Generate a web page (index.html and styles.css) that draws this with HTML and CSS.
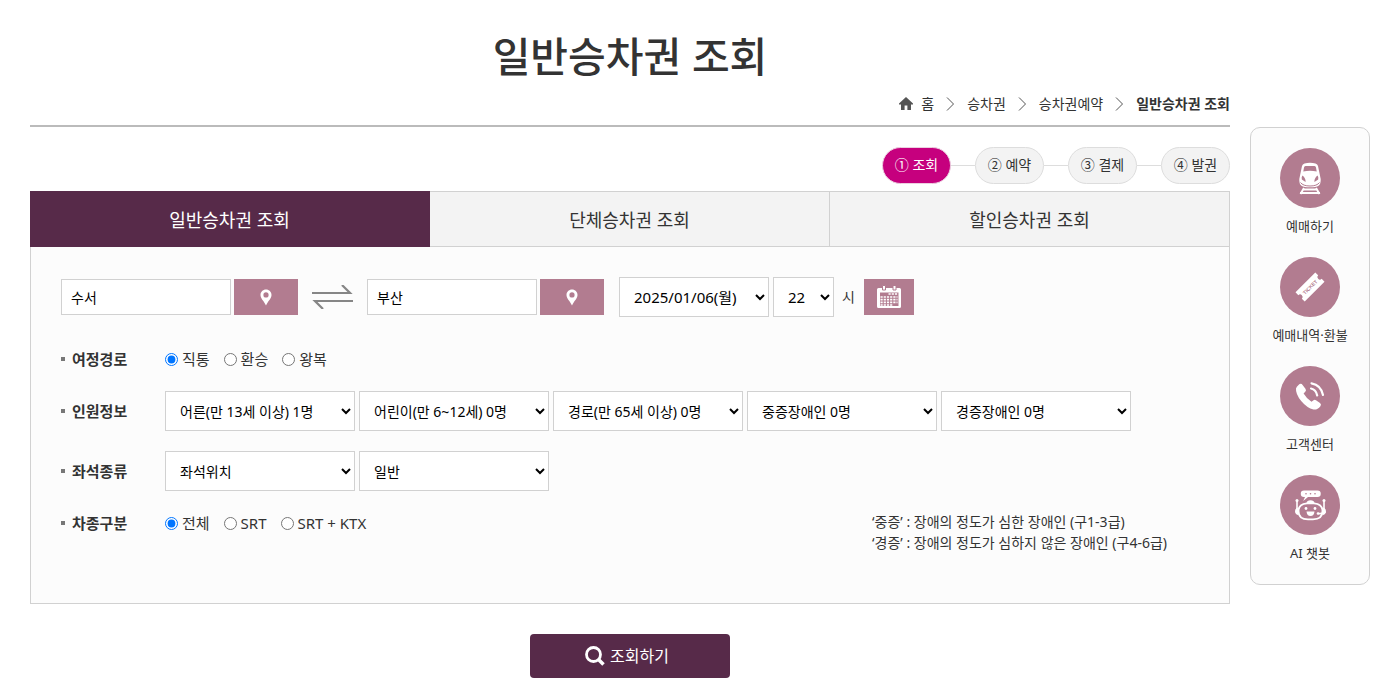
FILE: index.html
```html
<!DOCTYPE html>
<html lang="ko">
<head>
<meta charset="utf-8">
<meta name="viewport" content="width=device-width, initial-scale=1">
<title>일반승차권 조회</title>
<link rel="stylesheet" href="styles.css">
</head>
<body>
<div class="page">
  <main class="content">
    <h1 class="title">일반승차권 조회</h1>
    <nav class="breadcrumb" aria-label="현재 위치">
      <a class="crumb home" href="#"><svg width="14" height="13" viewBox="0 0 14 13"><path d="M7 0L0 6.600V7.600H2V13h3.600V8.600h2.800V13H12V7.600h2V6.600z" fill="#555"/></svg>홈</a>
      <svg class="sep" width="9" height="14" viewBox="0 0 9 14"><path d="M1 .5L7.5 7L1 13.5" fill="none" stroke="#555"/></svg>
      <a class="crumb" href="#">승차권</a>
      <svg class="sep" width="9" height="14" viewBox="0 0 9 14"><path d="M1 .5L7.5 7L1 13.5" fill="none" stroke="#555"/></svg>
      <a class="crumb" href="#">승차권예약</a>
      <svg class="sep" width="9" height="14" viewBox="0 0 9 14"><path d="M1 .5L7.5 7L1 13.5" fill="none" stroke="#555"/></svg>
      <strong class="current">일반승차권 조회</strong>
    </nav>
    <ol class="steps">
      <li class="step"><span class="pill on">① 조회</span></li>
      <li class="step"><span class="pill">② 예약</span></li>
      <li class="step"><span class="pill">③ 결제</span></li>
      <li class="step"><span class="pill">④ 발권</span></li>
    </ol>
    <nav class="tabs">
      <a class="tab active" href="#">일반승차권 조회</a>
      <a class="tab" href="#">단체승차권 조회</a>
      <a class="tab" href="#">할인승차권 조회</a>
    </nav>
    <form id="search" class="panel">
      <div class="route">
        <input class="station" type="text" value="수서" aria-label="출발역">
        <button class="pick" type="button" aria-label="출발역 선택"><svg width="12" height="17" viewBox="0 0 12 17"><path fill-rule="evenodd" d="M6 .5C2.800 .5 .5 2.900 .5 6C.5 9.500 4 12 6 16.500C8 12 11.500 9.500 11.500 6C11.500 2.900 9.200 .5 6 .5zM6 3.300a2.600 2.600 0 1 1 0 5.200a2.600 2.600 0 1 1 0-5.200z" fill="#fff"/></svg></button>
        <button class="swap" type="button" aria-label="출발역 도착역 바꾸기"><svg width="41" height="24" viewBox="0 0 41 24"><path d="M0 8h38L30 0M41 16H3l8 8" fill="none" stroke="#868686" stroke-width="2.200"/></svg></button>
        <input class="station" type="text" value="부산" aria-label="도착역">
        <button class="pick" type="button" aria-label="도착역 선택"><svg width="12" height="17" viewBox="0 0 12 17"><path fill-rule="evenodd" d="M6 .5C2.800 .5 .5 2.900 .5 6C.5 9.500 4 12 6 16.500C8 12 11.500 9.500 11.500 6C11.500 2.900 9.200 .5 6 .5zM6 3.300a2.600 2.600 0 1 1 0 5.200a2.600 2.600 0 1 1 0-5.200z" fill="#fff"/></svg></button>
        <select class="select date" aria-label="출발일"><option>2025/01/06(월)</option></select>
        <select class="select hour" id="hour"><option>22</option></select>
        <label class="unit" for="hour">시</label>
        <button class="calendar" type="button" aria-label="달력"><svg width="24" height="24" viewBox="0 0 24 24"><path fill="#fff" fill-rule="evenodd" d="M1.500 3H22.500Q24 3 24 4.500V21.500Q24 23 22.500 23H1.500Q0 23 0 21.500V4.500Q0 3 1.500 3zM3 7.500V21H21.500V7.500z"/><path fill="#fff" stroke="#b27c90" d="M5.500 .5h3v4.500h-3zM16 .5h3v4.500h-3z"/><path stroke="#fff" stroke-width="1.700" stroke-dasharray="2.200 1" d="M11.500 9h9M3.500 12h17M3.500 14.700h17M3.500 17.400h17M3.500 20h12.500"/></svg></button>
      </div>

      <div class="row" role="radiogroup" aria-labelledby="l-route">
        <span class="legend" id="l-route">여정경로</span>
        <div class="radios">
          <label class="radio"><input type="radio" name="route" checked>직통</label>
          <label class="radio"><input type="radio" name="route">환승</label>
          <label class="radio"><input type="radio" name="route">왕복</label>
        </div>
      </div>

      <div class="row" role="group" aria-labelledby="l-people">
        <span class="legend" id="l-people">인원정보</span>
        <div class="selects">
          <select class="select" aria-label="어른"><option>어른(만 13세 이상) 1명</option></select>
          <select class="select" aria-label="어린이"><option>어린이(만 6~12세) 0명</option></select>
          <select class="select" aria-label="경로"><option>경로(만 65세 이상) 0명</option></select>
          <select class="select" aria-label="중증장애인"><option>중증장애인 0명</option></select>
          <select class="select" aria-label="경증장애인"><option>경증장애인 0명</option></select>
        </div>
      </div>

      <div class="row" role="group" aria-labelledby="l-seat">
        <span class="legend" id="l-seat">좌석종류</span>
        <div class="selects">
          <select class="select" aria-label="좌석위치"><option>좌석위치</option></select>
          <select class="select" aria-label="좌석구분"><option>일반</option></select>
        </div>
      </div>

      <div class="row last" role="radiogroup" aria-labelledby="l-train">
        <span class="legend" id="l-train">차종구분</span>
        <div class="radios">
          <label class="radio"><input type="radio" name="train" checked>전체</label>
          <label class="radio"><input type="radio" name="train">SRT</label>
          <label class="radio"><input type="radio" name="train">SRT + KTX</label>
        </div>
        <p class="note">‘중증’ : 장애의 정도가 심한 장애인 (구1-3급)<br>‘경증’ : 장애의 정도가 심하지 않은 장애인 (구4-6급)</p>
      </div>
    </form>
    <button class="submit" type="submit" form="search"><svg width="20" height="20" viewBox="0 0 20 20"><circle cx="8.500" cy="8.500" r="7" fill="none" stroke="#fff" stroke-width="2.800"/><path d="M13.500 13.500L18.500 18.500" stroke="#fff" stroke-width="3.600"/></svg>조회하기</button>
  </main>

  <aside class="quick">
    <a class="quick-link" href="#"><span class="disc"><svg width="60" height="60" viewBox="0 0 60 60"><path fill="#fff" fill-rule="evenodd" d="M24.500 15.500Q30 14 35.500 15.500Q37.500 16 38 18L40.700 31Q41 36 38.500 37.800Q36 39.300 30 39.300Q24 39.300 21.500 37.800Q19 36 19.300 31L22 18Q22.500 16 24.500 15.500zM25.500 18Q24.200 18 24 19.500L23.300 23.500Q30 21.800 36.700 23.500L36 19.500Q35.800 18 34.500 18zM22.400 27.500Q21.300 29 21.800 31.500L25.600 34Q25.800 30 22.400 27.500zM37.600 27.500Q38.700 29 38.200 31.500L34.400 34Q34.200 30 37.600 27.500z"/><path fill="none" stroke="#b27c90" d="M20.500 34.500Q23 38 30 38Q37 38 39.500 34.500"/><path fill="none" stroke="#fff" stroke-width="2" d="M24 40l-3.500 6M36 40l3.500 6M22.500 41.500h15M20 45h20"/></svg></span>예매하기</a>
    <a class="quick-link" href="#"><span class="disc"><svg width="60" height="60" viewBox="0 0 60 60"><g transform="rotate(-45 30 30)"><path fill="#fff" d="M16 23.500H44V27.500A2.500 2.500 0 0 0 44 32.500V36.500H16V32.500A2.500 2.500 0 0 0 16 27.500z"/><text class="ticket-text" x="30" y="32" text-anchor="middle">TICKET</text></g></svg></span>예매내역·환불</a>
    <a class="quick-link" href="#"><span class="disc"><svg width="60" height="60" viewBox="0 0 60 60"><path fill="#fff" d="M18.500 19Q21 16.500 22.800 19.200L25.600 23Q26.600 24.800 25 26L23.600 27.500Q26.500 32.500 31.500 35.800L33.500 34.200Q34.700 33.200 36 34.200L40 37Q41.800 38.500 40.400 40.200Q37.500 44 33.500 43.500Q27 42 21.200 35Q15.500 28 16 22.500Q16.500 20.500 18.500 19z"/><path fill="none" stroke="#fff" stroke-width="2.200" stroke-linecap="round" d="M31 22.500Q36 23.500 37.200 29.500M31.500 17.300Q41 19 43 29"/></svg></span>고객센터</a>
    <a class="quick-link" href="#"><span class="disc"><svg width="60" height="60" viewBox="0 0 60 60"><path fill="#fff" d="M24 15.500H37.500A3.200 3.200 0 0 1 37.500 22H28L23.200 26L25 22H24A3.200 3.200 0 0 1 24 15.500z"/><g fill="#b27c90"><circle cx="26" cy="18.700" r=".8"/><circle cx="30.500" cy="18.700" r=".8"/><circle cx="35" cy="18.700" r=".8"/></g><path fill="#fff" d="M26.500 28Q27 25.300 30.500 25.300Q34 25.300 34.500 28z"/><path fill="none" stroke="#fff" stroke-width="1.800" d="M27 28.300H34Q42.500 29 42.500 36Q42.500 44.300 33 44.300H28Q18.500 44.300 18.500 36Q18.500 29 27 28.300z"/><path fill="none" stroke="#fff" stroke-width="1.600" d="M17 26v12M44 26v12M45.500 37Q43 39 38 38.500"/><path fill="#fff" d="M18.500 32.500Q15 33 15 36.200Q15 39.500 18.500 40zM42.500 32.500Q46 33 46 36.200Q46 39.500 42.500 40zM26.500 36.500H34.500Q34 41 30.500 41Q27 41 26.500 36.500z"/><g fill="#fff"><circle cx="17" cy="25.500" r="1.500"/><circle cx="44" cy="25.500" r="1.500"/><circle cx="26" cy="33.500" r="1.400"/><circle cx="35" cy="33.500" r="1.400"/><circle cx="38" cy="38.500" r="1.300"/></g></svg></span>AI 챗봇</a>
  </aside>
</div>
</body>
</html>
```
FILE: styles.css
```css
* { box-sizing: border-box; }

body {
  margin: 0;
  background: #fff;
  color: #333;
  font-family: "Noto Sans", "Noto Sans CJK KR", sans-serif;
  font-size: 14px;
  line-height: 20px;
}

a { color: inherit; text-decoration: none; }
svg { display: block; flex: none; }
button { border: 0; padding: 0; font: inherit; cursor: pointer; }
input, select { font: inherit; margin: 0; }

.page {
  display: flex;
  align-items: flex-start;
  gap: 20px;
  padding: 0 11px 14px 30px;
}

.content { flex: 1; min-width: 0; }

.title {
  margin: 0;
  padding-top: 26px;
  font-size: 41px;
  line-height: 60px;
  font-weight: 500;
  text-align: center;
}

.breadcrumb {
  display: flex;
  justify-content: flex-end;
  align-items: center;
  gap: 10px;
  height: 41px;
  padding-bottom: 4px;
  border-bottom: 2px solid #bbb;
}
.crumb { display: flex; align-items: center; gap: 8px; }
.sep { margin: 0 2px; }
.current { font-weight: 700; }

.steps {
  display: flex;
  justify-content: flex-end;
  margin: 0;
  padding: 20px 0 7px;
  list-style: none;
}
.step { display: flex; align-items: center; }
.step + .step::before {
  content: "";
  width: 24px;
  height: 1px;
  background: #ddd;
}
.pill {
  min-width: 69px;
  padding: 7px 10px 8px;
  border: 1px solid #ddd;
  border-radius: 19px;
  background: #f3f3f3;
  text-align: center;
}
.pill.on { border-color: #eccfe0; background: #c6007e; color: #fff; }

.tabs { display: flex; }
.tab {
  flex: 1;
  height: 56px;
  border: 1px solid #d1d1d1;
  border-left-width: 0;
  background: #f3f3f3;
  font-size: 18px;
  line-height: 56px;
  text-align: center;
}
.tab.active { border-color: #572a49; background: #572a49; color: #fff; }

.panel {
  padding: 30px 30px 50px;
  border: 1px solid #d1d1d1;
  border-top: 0;
  background: #fcfcfc;
}

.route { display: flex; align-items: center; margin-bottom: 30px; }
.station {
  width: 170px;
  height: 36px;
  padding: 0 9px;
  border: 1px solid #d1d1d1;
  background: #fff;
  color: #000;
}
.pick, .calendar {
  display: flex;
  align-items: center;
  justify-content: center;
  height: 36px;
  background: #b27c90;
}
.pick { width: 64px; margin-left: 3px; }
.swap { margin: 0 14px; background: none; }
.calendar { width: 50px; margin-left: 9px; }
.select {
  width: 190px;
  height: 40px;
  padding: 0 0 0 10px;
  border: 1px solid #d1d1d1;
  border-radius: 0;
  background: #fff;
  color: #000;
}
.date { width: 150px; margin-left: 15px; font-size: 15px; }
.hour { width: 61px; margin: 0 8px 0 4px; font-size: 15px; }

.row { display: flex; align-items: center; margin-bottom: 20px; }
.legend {
  display: flex;
  align-items: center;
  gap: 7px;
  flex: none;
  width: 104px;
  font-size: 15px;
  line-height: 24px;
  font-weight: 700;
}
.legend::before { content: ""; width: 4px; height: 4px; background: #777; }
.selects { display: flex; flex-wrap: wrap; gap: 4px; }
.radios { display: flex; gap: 14px; font-size: 15px; line-height: 24px; }
.radio { display: flex; align-items: center; gap: 4px; }
.radio input { width: 13px; height: 13px; }

.last { align-items: flex-start; margin: 0; }
.note { margin: 0 32px 0 auto; line-height: 21px; }

.submit {
  display: flex;
  align-items: center;
  justify-content: center;
  gap: 5px;
  width: 200px;
  height: 44px;
  margin: 30px auto 0;
  padding-right: 6px;
  border-radius: 4px;
  background: #572a49;
  color: #fff;
  font-size: 16px;
}

.quick {
  display: flex;
  flex-direction: column;
  gap: 21px;
  flex: none;
  width: 120px;
  margin-top: 127px;
  padding: 20px 0 21px;
  border: 1px solid #d1d1d1;
  border-radius: 10px;
  background: #fcfcfc;
}
.quick-link {
  display: flex;
  flex-direction: column;
  align-items: center;
  gap: 8px;
  font-size: 13px;
}
.disc { border-radius: 50%; background: #b27c90; }
.ticket-text { fill: #b27c90; font: 700 5px "Liberation Sans", sans-serif; }
```
